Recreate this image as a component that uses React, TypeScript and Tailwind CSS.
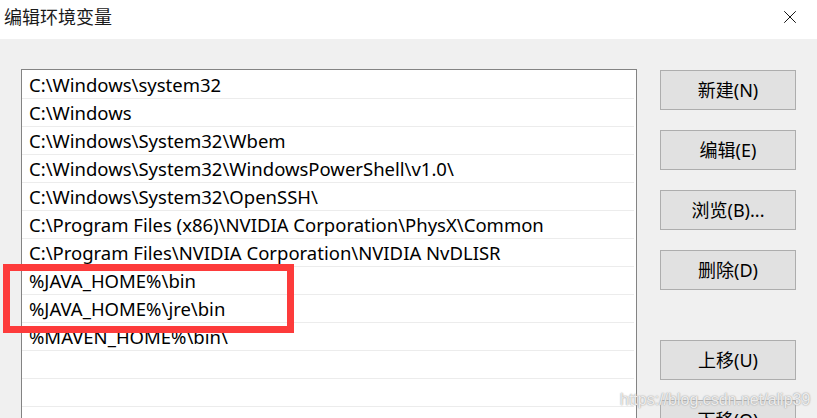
import { X } from "lucide-react";

const paths = [
  "C:\\Windows\\system32",
  "C:\\Windows",
  "C:\\Windows\\System32\\Wbem",
  "C:\\Windows\\System32\\WindowsPowerShell\\v1.0\\",
  "C:\\Windows\\System32\\OpenSSH\\",
  "C:\\Program Files (x86)\\NVIDIA Corporation\\PhysX\\Common",
  "C:\\Program Files\\NVIDIA Corporation\\NVIDIA NvDLISR",
  "%JAVA_HOME%\\bin",
  "%JAVA_HOME%\\jre\\bin",
  "%MAVEN_HOME%\\bin\\",
  "",
  "",
  "",
];

const font = "font-['Noto_Sans','Noto_Sans_CJK_SC',sans-serif]";

function DlgButton({ label }: { label: string }) {
  return (
    <button className="w-[136px] h-[40px] shrink-0 bg-[#e1e1e1] border border-[#adadad] text-[18px] text-black leading-none">
      {label}
    </button>
  );
}

export default function App() {
  return (
    <div className={`relative w-[817px] h-[418px] overflow-hidden bg-[#f0f0f0] ${font}`}>
      {/* Title bar */}
      <div className="h-[39px] bg-white flex items-center justify-between pl-[4px] pr-[16px]">
        <span className="text-[18px] text-[#1a1a1a] font-['Noto_Sans_CJK_SC',sans-serif] -mt-[6px]">编辑环境变量</span>
        <X className="h-[22px] w-[22px] text-black -mt-[6px]" strokeWidth={1} />
      </div>

      {/* Body */}
      <div className="flex pt-[30px] pl-[21px] gap-[23px]">
        {/* Path list */}
        <div className="w-[616px] h-[400px] shrink-0 bg-white border border-[#838383] pt-px pr-[2px]">
          {paths.map((p, i) => (
            <div
              key={i}
              className="h-[28px] border-b border-[#ececec] flex items-center pl-[7px] text-[18.5px] text-black whitespace-nowrap"
            >
              {p}
            </div>
          ))}
        </div>

        {/* Buttons */}
        <div className="flex flex-col pt-px">
          <div className="flex flex-col gap-[20px]">
            <DlgButton label="新建(N)" />
            <DlgButton label="编辑(E)" />
            <DlgButton label="浏览(B)..." />
            <DlgButton label="删除(D)" />
          </div>
          <div className="flex flex-col gap-[20px] mt-[50px]">
            <DlgButton label="上移(U)" />
            <DlgButton label="下移(O)" />
          </div>
        </div>
      </div>

      {/* Red highlight annotation */}
      <div className="absolute left-[3px] top-[264px] w-[291px] h-[69px] border-[7px] border-[#fd3b3b]" />

      {/* Watermark */}
      <div className="absolute left-[620px] top-[388px] text-[16px] leading-[24px] text-white/80 font-['Liberation_Sans',sans-serif] [text-shadow:0_0_1px_#9a9a9a,0_0_2px_#b0b0b0]">
        https://blog.csdn.net/alip39
      </div>
    </div>
  );
}
